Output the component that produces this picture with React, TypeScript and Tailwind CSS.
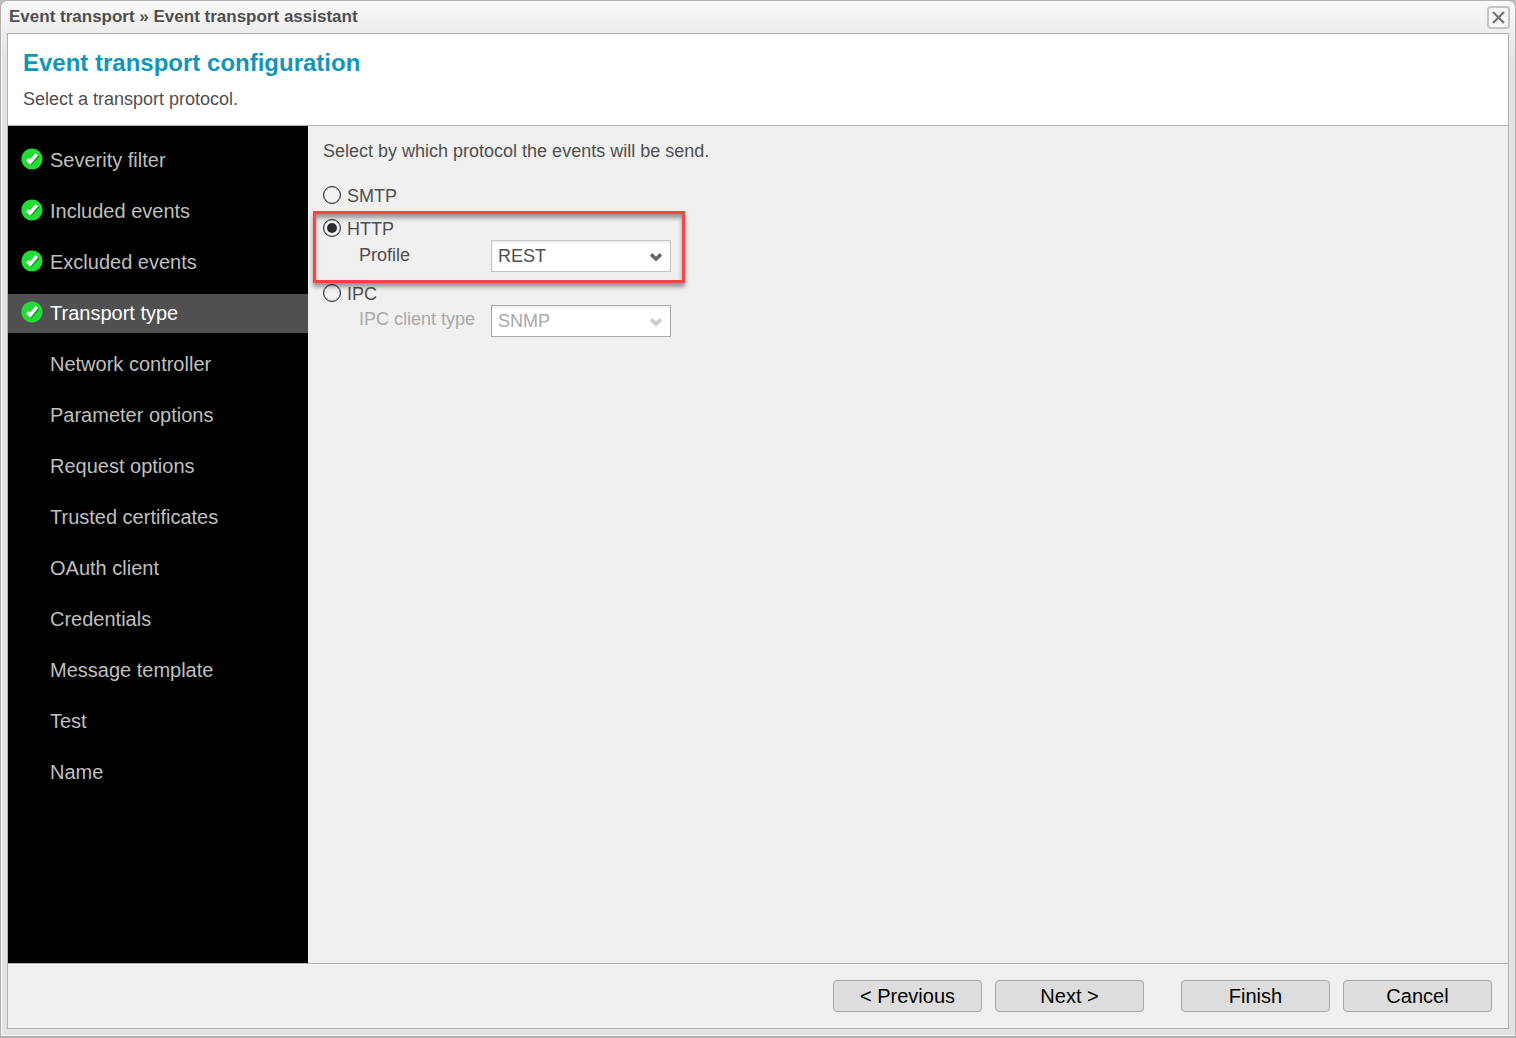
import { useState } from 'react';

const steps = [
  { title: 'Severity filter', done: true },
  { title: 'Included events', done: true },
  { title: 'Excluded events', done: true },
  { title: 'Transport type', done: true },
  { title: 'Network controller', done: false },
  { title: 'Parameter options', done: false },
  { title: 'Request options', done: false },
  { title: 'Trusted certificates', done: false },
  { title: 'OAuth client', done: false },
  { title: 'Credentials', done: false },
  { title: 'Message template', done: false },
  { title: 'Test', done: false },
  { title: 'Name', done: false },
];

const currentStep = 'Transport type';

function CheckIcon() {
  return (
    <svg width="22" height="22" viewBox="0 0 22 22" aria-hidden="true">
      <circle cx="11" cy="11" r="10.6" fill="#22dd33" />
      <path d="M7.4 12.6l2.8 2.8L17.4 7.4" fill="none" stroke="#129a26" strokeWidth="3" />
      <path d="M6.2 11.2l3 3L15.8 6.2" fill="none" stroke="#fff" strokeWidth="3.4" />
    </svg>
  );
}

function Chevron({ color }: { color: string }) {
  return (
    <svg
      className="pointer-events-none absolute right-2 top-3"
      width="14"
      height="10"
      viewBox="0 0 14 10"
      aria-hidden="true"
    >
      <path d="M2 2.4L7 7l5-4.6" fill="none" stroke={color} strokeWidth="3.6" />
    </svg>
  );
}

function ProtocolRadio({
  value,
  selected,
  onSelect,
}: {
  value: string;
  selected: string;
  onSelect: (value: string) => void;
}) {
  return (
    <label className="flex h-6 items-center gap-1.5">
      <input
        type="radio"
        name="protocol"
        value={value}
        checked={selected === value}
        onChange={() => onSelect(value)}
        className="flex size-[18px] appearance-none items-center justify-center rounded-full border border-[#2b2b33] bg-[#f3f3f3] shadow-[inset_0_0_1px_#2b2b33] before:size-[10px] before:rounded-full before:content-[''] checked:before:bg-[#2b2b33]"
      />
      <span className="pt-px">{value}</span>
    </label>
  );
}

function WizardButton({ children }: { children: string }) {
  return (
    <button
      type="button"
      className="h-8 w-[149px] rounded-[4px] border border-[#a5a8b1] bg-[#dddddd] text-xl leading-6 text-black"
    >
      {children}
    </button>
  );
}

export default function App() {
  const [protocol, setProtocol] = useState('HTTP');

  return (
    <div className="flex min-h-screen bg-[#bdbdbd] font-['Liberation_Sans',Arial,sans-serif] text-lg leading-6 text-[#4f4f4f]">
      <div className="flex flex-1 flex-col rounded-t-[7px] border border-b-2 border-[#b0b0b0] bg-[#e3e3e3] bg-linear-to-b from-[#f9f9f9] to-[#e3e3e3] to-[60px] px-1.5 pb-[7px] shadow-[inset_1px_-1px_0_#f4f4f4]">
        <header className="flex h-8 items-center justify-between">
          <h1 className="pl-0.5 text-[17px] leading-6 font-bold">
            Event transport » Event transport assistant
          </h1>
          <button
            type="button"
            aria-label="Close"
            className="-mr-px flex size-[23px] items-center justify-center rounded-[4px] border-2 border-[#c4c4c4] bg-[#f8f8f8]"
          >
            <svg width="13" height="13" viewBox="0 0 13 13" aria-hidden="true">
              <path d="M1 1l11 11M12 1L1 12" stroke="#777" strokeWidth="2.4" />
            </svg>
          </button>
        </header>

        <div className="flex flex-1 flex-col border border-[#b0b0b0] bg-[#f0f0f0]">
          <div className="border-b border-[#b0b0b0] bg-white px-[15px] pt-[13px] pb-3.5">
            <h2 className="text-2xl leading-8 font-bold text-[#1296b6]">Event transport configuration</h2>
            <p className="mt-2">Select a transport protocol.</p>
          </div>

          <div className="flex flex-1">
            <nav className="w-[300px] shrink-0 bg-black pt-[15px]" aria-label="Assistant steps">
              <ol className="flex flex-col gap-3">
                {steps.map((step) => (
                  <li
                    key={step.title}
                    aria-current={step.title === currentStep ? 'step' : undefined}
                    className={`flex h-[39px] items-center gap-[7px] pb-0.5 pl-[13px] text-xl leading-6 ${
                      step.title === currentStep ? 'bg-[#505050] text-white' : 'text-[#bfbfbf]'
                    }`}
                  >
                    <span className="w-[22px] pb-0.5">{step.done && <CheckIcon />}</span>
                    {step.title}
                  </li>
                ))}
              </ol>
            </nav>

            <main className="flex-1 px-[15px] pt-[13px]">
              <p>Select by which protocol the events will be send.</p>

              <div className="mt-5 flex flex-col gap-[9px]">
                <ProtocolRadio value="SMTP" selected={protocol} onSelect={setProtocol} />

                <div className="relative w-[348px]">
                  <ProtocolRadio value="HTTP" selected={protocol} onSelect={setProtocol} />
                  <div className="flex pl-9">
                    <label htmlFor="profile" className="w-[132px] pt-[3px]">
                      Profile
                    </label>
                    <div className="relative w-[180px]">
                      <select
                        id="profile"
                        className="h-8 w-full appearance-none border border-[#c4c4c4] bg-white pl-1.5 shadow-[inset_0_2px_3px_#eeeeee]"
                      >
                        <option>REST</option>
                      </select>
                      <Chevron color="#6b6b6b" />
                    </div>
                  </div>
                  {/* highlight frame around the HTTP option */}
                  <div className="pointer-events-none absolute -top-[5px] -right-3.5 -bottom-[11px] -left-2.5 border-[3px] border-[#fb4343] shadow-[0_4px_4px_#00000060,inset_0_4px_4px_#00000060]" />
                </div>

                <div className="w-[348px]">
                  <ProtocolRadio value="IPC" selected={protocol} onSelect={setProtocol} />
                  <div className="flex pl-9">
                    <label htmlFor="ipc-type" className="w-[132px] pt-0.5 text-[#a9a9a9]">
                      IPC client type
                    </label>
                    <div className="relative w-[180px]">
                      <select
                        id="ipc-type"
                        disabled
                        className="h-8 w-full appearance-none border border-[#a9a9a9] bg-white pl-1.5 text-[#a9a9a9] opacity-100 shadow-[inset_0_2px_3px_#eeeeee]"
                      >
                        <option>SNMP</option>
                      </select>
                      <Chevron color="#cccccc" />
                    </div>
                  </div>
                </div>
              </div>
            </main>
          </div>

          <footer className="flex h-[65px] items-center justify-end gap-[13px] border-t border-[#b0b0b0] px-4 shadow-[inset_0_1px_0_#ffffff]">
            <WizardButton>{'< Previous'}</WizardButton>
            <WizardButton>{'Next >'}</WizardButton>
            <div className="ml-6 flex gap-[13px]">
              <WizardButton>Finish</WizardButton>
              <WizardButton>Cancel</WizardButton>
            </div>
          </footer>
        </div>
      </div>
    </div>
  );
}
